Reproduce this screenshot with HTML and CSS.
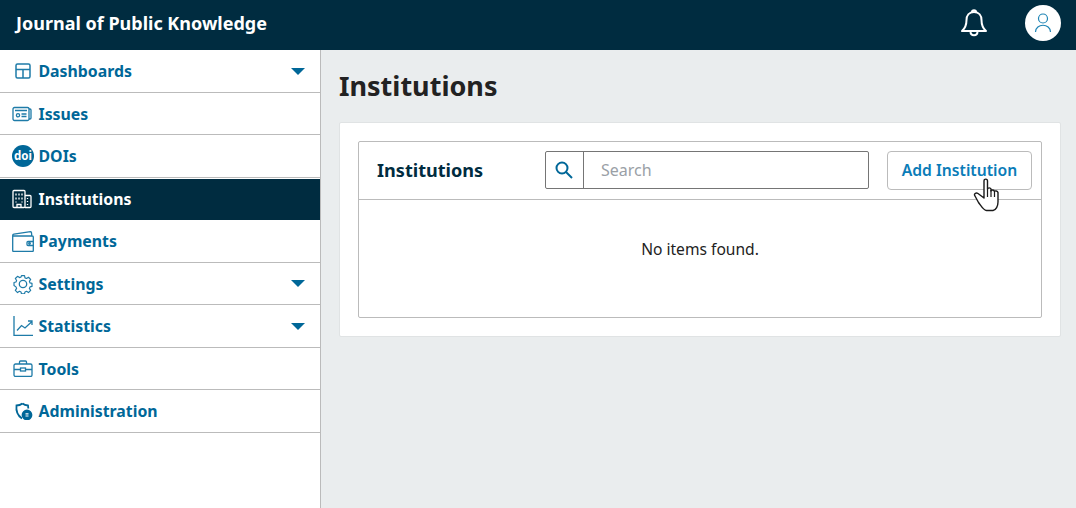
FILE: index.html
```html
<!DOCTYPE html>
<html>
  <head>
    <title>Institutions</title>
    <link rel="stylesheet" href="styles.css">
  </head>
<body>
  <header class="topbar">
    <div class="journal">Journal of Public Knowledge</div>
    <div class="topbar-actions">
      <svg class="bell" viewBox="0 0 28 30" width="28" height="30" fill="none" stroke="#fff" stroke-width="2" stroke-linejoin="round">
        <path d="M14 4c-5 0-7.500 3.500-7.500 8 0 5-1 8-4.500 11h24c-3.500-3-4.500-6-4.500-11 0-4.500-2.500-8-7.500-8z"/>
        <path d="M12 4c0-2.500 4-2.500 4 0"/>
        <path d="M10.500 23.500c0 5 7 5 7 0"/>
      </svg>
      <div class="avatar">
        <svg viewBox="0 0 20 22" width="20" height="22" fill="none" stroke="#1e84b5" stroke-width="1.200">
          <circle cx="10" cy="6.500" r="4.500"/>
          <path d="M2.500 20c0-9 15-9 15 0"/>
        </svg>
      </div>
    </div>
  </header>

  <div class="layout">
    <nav class="sidebar">
      <a class="nav-item">
        <svg class="nav-icon dash" viewBox="0 0 16 16" width="16" height="16"><rect x="1" y="1" width="14" height="14" rx="1.500"/><path d="M1 6.500h14M8 6.500V15"/></svg>
        <span class="nav-label">Dashboards</span>
        <i class="caret"></i>
      </a>
      <a class="nav-item">
        <svg class="nav-icon" viewBox="0 0 20 16" width="20" height="16"><rect x="1" y="1.500" width="16" height="13" rx="1.500"/><path d="M17 3h1c.6 0 1 .4 1 1v8c0 .6-.4 1-1 1h-1"/><path d="M3 4.500h12M9.500 8h5M9.500 10.500h5"/><circle cx="6" cy="9.300" r="1.600"/></svg>
        <span class="nav-label">Issues</span>
      </a>
      <a class="nav-item">
        <svg class="doi-icon" viewBox="0 0 22 22" width="22" height="22"><circle cx="11" cy="11" r="11" fill="#006798"/><text x="11" y="14.800" text-anchor="middle" class="doi-text">doi</text></svg>
        <span class="nav-label">DOIs</span>
      </a>
      <a class="nav-item current">
        <svg class="nav-icon" viewBox="0 0 20 20" width="20" height="20"><rect x="1" y="1.500" width="12" height="17" rx="1"/><path d="M13 6.500h5c.6 0 1 .4 1 1v10c0 .6-.4 1-1 1h-5"/><path d="M4 4.500v2M7 4.500v2M10 4.500v2M4 8.500v2M7 8.500v2M10 8.500v2M4 12.500v1M10 12.500v1M15.500 9v1M15.500 12v1M15.500 15v1"/><path d="M5 18.500v-3h4v3"/></svg>
        <span class="nav-label">Institutions</span>
      </a>
      <a class="nav-item">
        <svg class="nav-icon wallet" viewBox="0 0 22 21" width="22" height="21"><path d="M.7 4.500V19.500c0 .6.400 1 1 1h18.600c.6 0 1-.4 1-1V6c0-.6-.4-1-1-1H2c-.8 0-1.300-.2-1.300-.5 0-.8.500-1.200 1.200-1.300L18.500.7c.6 0 .8.400 1 1l.3 3.300"/><path d="M21.300 10.500H16c-.6 0-1 .4-1 1v2c0 .6.400 1 1 1h5.300"/><circle cx="17.500" cy="12.500" r=".8"/></svg>
        <span class="nav-label">Payments</span>
      </a>
      <a class="nav-item">
        <svg class="nav-icon offset" viewBox="0 0 20 20" width="20" height="20"><path d="M8.300.7h3.400l.5 2.500 1.700.7 2.200-1.400 2.400 2.400-1.400 2.200.7 1.700 2.200.5v3.400l-2.200.5-.7 1.700 1.400 2.200-2.400 2.400-2.200-1.400-1.700.7-.5 2.200H8.300l-.5-2.200-1.700-.7-2.200 1.400-2.400-2.400 1.400-2.200-.7-1.700L0 11.700V8.300l2.200-.5.700-1.700-1.400-2.200 2.400-2.400 2.200 1.400 1.700-.7z" transform="translate(1 1) scale(.9)" stroke-linejoin="round"/><circle cx="10" cy="10" r="3.700"/></svg>
        <span class="nav-label">Settings</span>
        <i class="caret"></i>
      </a>
      <a class="nav-item">
        <svg class="nav-icon offset" viewBox="0 0 20 20" width="20" height="20"><path d="M1 0v19.500h19"/><path d="M4 14.500l4.500-5 3.500 2.500 7-6.500M15 5h4v4"/></svg>
        <span class="nav-label">Statistics</span>
        <i class="caret"></i>
      </a>
      <a class="nav-item">
        <svg class="nav-icon offset" viewBox="0 0 20 17" width="20" height="17"><rect x="1" y="4" width="18" height="12.500" rx="1.500"/><path d="M6.500 4V2c0-.6.400-1 1-1h5c.6 0 1 .4 1 1v2M1 9.500h6.500M12.500 9.500H19"/><rect x="7.500" y="8" width="5" height="3"/></svg>
        <span class="nav-label">Tools</span>
      </a>
      <a class="nav-item">
        <svg class="nav-icon shield" viewBox="0 0 20 18" width="20" height="18"><path d="M9.500 1.500c-2 1.500-4 2-6 2-.5 4-.3 9 5.500 13M9.500 1.500c1.500 1.200 3.500 1.800 5.500 2l.3 3"/><circle cx="14" cy="13" r="4.500" class="shield-dot"/><path d="M12.500 11.800h3M12.500 14h3" class="shield-mark"/></svg>
        <span class="nav-label">Administration</span>
      </a>
    </nav>

    <main class="content">
      <h1>Institutions</h1>
      <section class="panel">
        <div class="grid-box">
          <div class="grid-head">
            <h2>Institutions</h2>
            <div class="search">
              <span class="search-btn">
                <svg viewBox="0 0 18 18" width="18" height="18" fill="none" stroke="#006798" stroke-width="2"><circle cx="7" cy="7" r="5.500"/><path d="M11 11l6 6"/></svg>
              </span>
              <input class="search-input" type="text" placeholder="Search">
            </div>
            <button class="add-btn">Add Institution</button>
          </div>
          <div class="empty">No items found.</div>
        </div>
      </section>
    </main>
  </div>

  <svg class="cursor" viewBox="0 0 28 34" width="28" height="34">
    <path d="M11 20V3c0-2.500 3.500-2.500 3.500 0v8c.5-1.500 3-1.500 3.500 0v2c.5-1.500 3-1.500 3.500.5.5-1 3-.8 3.500 1V24c0 4-2 8-5 8.500h-6.500c-3 0-5-4-8-8L2 18c-1.500-2 1-4 3-2.500z" fill="#fff" stroke="#1a1a1a" stroke-width="1.400" stroke-linejoin="round"/>
    <path d="M14.500 11v8M18 12v7M21.500 13v6" fill="none" stroke="#1a1a1a" stroke-width="1.200"/>
  </svg>
</body>
</html>
```

FILE: styles.css
```css
html,
body {
  margin: 0;
  height: 100%;
  overflow: hidden;
}

body {
  background: #eaedee;
  color: #222;
  font-family: "Noto Sans", sans-serif;
}

.topbar {
  display: flex;
  align-items: center;
  justify-content: space-between;
  box-sizing: border-box;
  height: 50px;
  padding: 0 15px 4px 16px;
  background: #002c40;
  color: #fff;
}

.journal {
  font-size: 18px;
  font-weight: 700;
}

.topbar-actions {
  display: flex;
  align-items: center;
  gap: 37px;
}

.bell {
  display: block;
}

.avatar {
  display: flex;
  align-items: center;
  justify-content: center;
  width: 36px;
  height: 36px;
  border-radius: 50%;
  background: #fff;
}

.layout {
  display: flex;
  height: 458px;
}

.sidebar {
  flex: none;
  box-sizing: border-box;
  width: 321px;
  background: #fff;
  border-right: 1px solid #bbb;
}

.nav-item {
  display: grid;
  grid-template-columns: 26.5px 1fr auto;
  align-items: center;
  box-sizing: border-box;
  height: 42.5px;
  padding: 0.5px 15px 0 12px;
  border-bottom: 1px solid #bbb;
  color: #006798;
  font-size: 15.850px;
  font-weight: 700;
}

.nav-item.current {
  background: #002c40;
  background-clip: padding-box;
  color: #fff;
  border-bottom-color: #002c40;
  border-top: 1px solid #fff;
}

.nav-icon {
  fill: none;
  stroke: #1e7ba8;
  stroke-width: 1.300;
}

.nav-icon.dash {
  margin-left: 3px;
  stroke-width: 1.500;
}

.nav-icon.offset {
  margin-left: 1px;
}

.current .nav-icon {
  stroke: #fff;
}

.doi-text {
  fill: #fff;
  font-family: "Noto Sans", sans-serif;
  font-size: 11.500px;
  font-weight: 700;
}

.shield {
  margin-left: 1px;
  stroke: #006798;
  stroke-width: 1.800;
}

.shield-dot {
  fill: #006798;
}

.shield-mark {
  stroke: #fff;
  stroke-width: 1.200;
}

.caret {
  width: 0;
  height: 0;
  border-left: 7px solid transparent;
  border-right: 7px solid transparent;
  border-top: 7px solid #006798;
}

.content {
  flex: 1;
  padding: 0 15px 0 18px;
}

.content h1 {
  margin: 17px 0 18px 0;
  font-size: 27px;
  line-height: 37px;
  font-weight: 700;
}

.panel {
  padding: 18px;
  background: #fff;
  border: 1px solid #e0e3e4;
  border-radius: 2px;
}

.grid-box {
  border: 1px solid #bbb;
  border-radius: 2px;
}

.grid-head {
  display: flex;
  align-items: flex-start;
  box-sizing: border-box;
  height: 58px;
  padding: 9px 9px 0 18px;
  border-bottom: 1px solid #bbb;
}

.grid-head h2 {
  width: 168px;
  margin: 7px 0 0;
  color: #002c40;
  font-size: 18.100px;
  line-height: 24px;
  font-weight: 700;
}

.search {
  display: flex;
  width: 324px;
  height: 38px;
  box-sizing: border-box;
  border: 1px solid #757575;
  border-radius: 2px;
}

.search-btn {
  display: flex;
  align-items: center;
  justify-content: center;
  flex: none;
  box-sizing: border-box;
  width: 38px;
  padding-right: 2px;
  border-right: 1px solid #757575;
}

.search-input {
  flex: 1;
  min-width: 0;
  padding: 0 17px;
  border: 0;
  outline: 0;
  background: transparent;
  font-family: inherit;
  font-size: 16px;
}

.search-input::placeholder {
  color: #9aa0a6;
}

.add-btn {
  box-sizing: border-box;
  width: 145px;
  height: 39px;
  margin-left: auto;
  padding: 0 0 2px;
  background: #fff;
  border: 1px solid #bbb;
  border-radius: 4px;
  color: #0a7cb8;
  font-family: inherit;
  font-size: 15.700px;
  font-weight: 600;
}

.empty {
  height: 117px;
  padding-top: 37px;
  box-sizing: border-box;
  text-align: center;
  font-size: 15.600px;
  line-height: 24px;
}

.cursor {
  position: absolute;
  left: 973px;
  top: 178px;
}
```
